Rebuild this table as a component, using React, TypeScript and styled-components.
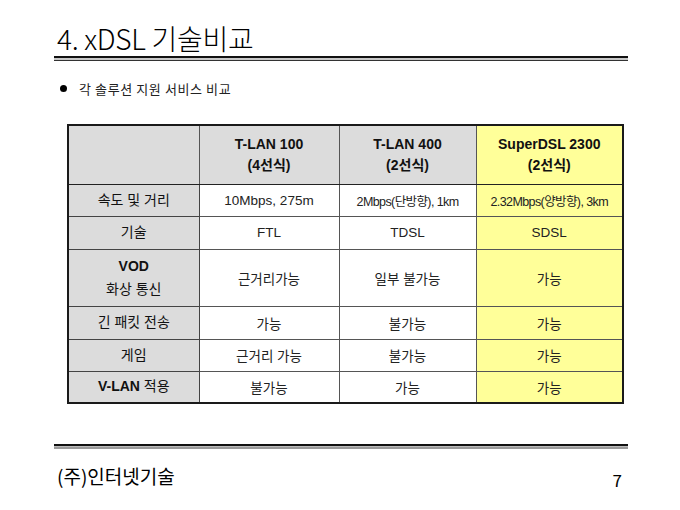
import React from 'react'
import styled, { createGlobalStyle } from 'styled-components'

const GlobalStyle = createGlobalStyle`
  html, body {
    margin: 0;
    padding: 0;
    background: #ffffff;
  }
  body {
    font-family: "Liberation Sans", "Noto Sans CJK KR", sans-serif;
    color: #000000;
  }
`

type Row = {
  label: React.ReactNode;
  cells: string[];
  height: number;
}

const rows: Row[] = [
  { label: '속도 및 거리', cells: ['10Mbps, 275m', '2Mbps(단방향), 1km', '2.32Mbps(양방향), 3km'], height: 32 },
  { label: '기술', cells: ['FTL', 'TDSL', 'SDSL'], height: 33 },
  { label: <><b>VOD</b><br />화상 통신</>, cells: ['근거리가능', '일부 불가능', '가능'], height: 57 },
  { label: '긴 패킷 전송', cells: ['가능', '불가능', '가능'], height: 33 },
  { label: '게임', cells: ['근거리 가능', '불가능', '가능'], height: 32 },
  { label: <><b>V-LAN</b> 적용</>, cells: ['불가능', '가능', '가능'], height: 32 },
]

const App = () => {
  return (
    <Page>
      <GlobalStyle />
      <Title>4. xDSL 기술비교</Title>
      <DoubleRule />
      <Bullet>
        <Dot />
        <span>각 솔루션 지원 서비스 비교</span>
      </Bullet>
      <TableWrap>
        <Table>
          <colgroup>
            <col style={{ width: 131 }} />
            <col style={{ width: 140 }} />
            <col style={{ width: 137 }} />
            <col style={{ width: 147 }} />
          </colgroup>
          <thead>
            <tr style={{ height: 59 }}>
              <HeadCell $bg="#dcdcdc" />
              <HeadCell $bg="#dcdcdc">T-LAN 100<br />(4선식)</HeadCell>
              <HeadCell $bg="#dcdcdc">T-LAN 400<br />(2선식)</HeadCell>
              <HeadCell $bg="#ffff99">SuperDSL 2300<br />(2선식)</HeadCell>
            </tr>
          </thead>
          <tbody>
            {rows.map((row, i) => (
              <tr key={i} style={{ height: row.height }}>
                <LabelCell>{row.label}</LabelCell>
                {row.cells.map((c, j) => (
                  <Cell key={j} $highlight={j === 2} $tight={i === 0 && j > 0}>
                    {c}
                  </Cell>
                ))}
              </tr>
            ))}
          </tbody>
        </Table>
      </TableWrap>
      <Footer>
        <DoubleRule $flip />
        <FooterRow>
          <Company>(주)인터넷기술</Company>
          <PageNum>7</PageNum>
        </FooterRow>
      </Footer>
    </Page>
  )
}

const Page = styled.div`
  width: 680px;
  height: 510px;
  box-sizing: border-box;
  padding: 20px 52px 0 54px;
  display: flex;
  flex-direction: column;
  overflow: hidden;
`

const Title = styled.h1`
  margin: 0 0 0 3px;
  font-family: "Noto Sans CJK KR", sans-serif;
  font-weight: 300;
  font-size: 28px;
  line-height: 36px;
  letter-spacing: -0.3px;
  color: #000;
`

const DoubleRule = styled.div<{ $flip?: boolean }>`
  height: 5px;
  box-sizing: border-box;
  border-top: 2px solid #111;
  border-bottom: ${p => (p.$flip ? '2px solid #9a9a9a' : '1px solid #333')};
  background: ${p => (p.$flip ? '#bbbbbb' : '#c8c8c8')};
`

const Bullet = styled.div`
  display: flex;
  align-items: center;
  margin: 18px 0 0 6px;
  font-family: "Noto Sans CJK KR", sans-serif;
  font-size: 13px;
  letter-spacing: 0.6px;
  color: #222;
  gap: 12px;
`

const Dot = styled.span`
  width: 7px;
  height: 7px;
  border-radius: 50%;
  background: #000;
`

const TableWrap = styled.div`
  margin: 26px 0 0 13px;
`

const Table = styled.table`
  border-collapse: collapse;
  table-layout: fixed;
  width: 555px;
  border: 2px solid #1a1a1a;
  font-size: 13px;
`

const HeadCell = styled.th<{ $bg: string }>`
  background: ${p => p.$bg};
  border: 1px solid #555;
  border-bottom: 1px solid #222;
  font-weight: bold;
  font-size: 14px;
  line-height: 21px;
  text-align: center;
  vertical-align: middle;
  padding: 0;
  color: #111;
`

const LabelCell = styled.td`
  background: #dcdcdc;
  border: 1px solid #444;
  text-align: center;
  font-size: 14px;
  line-height: 23px;
  color: #111;
  padding: 0;

  b {
    font-weight: bold;
  }
`

const Cell = styled.td<{ $highlight?: boolean; $tight?: boolean }>`
  background: ${p => (p.$highlight ? '#ffff99' : '#ffffff')};
  border: 1px solid #555;
  text-align: center;
  padding: 0;
  color: #222;
  font-size: ${p => (p.$tight ? '12.5px' : '13.5px')};
  letter-spacing: ${p => (p.$tight ? '-0.6px' : '0')};
  white-space: nowrap;
`

const Footer = styled.div`
  margin-top: 40px;
`

const FooterRow = styled.div`
  display: flex;
  justify-content: space-between;
  align-items: flex-end;
  padding: 13px 6px 0 3px;
`

const Company = styled.span`
  font-family: "Noto Sans CJK KR", sans-serif;
  font-size: 19px;
  color: #000;
`

const PageNum = styled.span`
  font-family: "Noto Sans CJK KR", sans-serif;
  font-size: 17px;
  color: #000;
  margin-bottom: -3px;
`

export default App
